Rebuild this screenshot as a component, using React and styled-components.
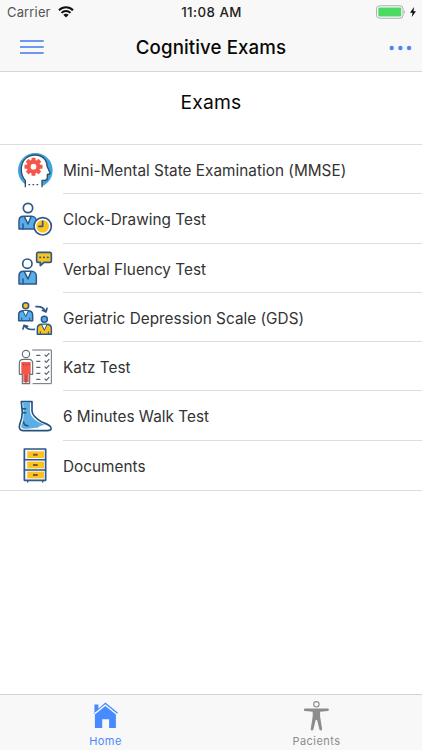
import React from 'react';
import styled, { createGlobalStyle } from 'styled-components';

const BLUE = '#4a87f0';
const NAVY = '#2d588a';
const SKY = '#5aaee8';
const YELLOW = '#fcc21f';
const RED = '#f2574a';

// Styles
const GlobalStyle = createGlobalStyle`
  body {
    margin: 0;
    background: #fff;
    font-family: Inter, 'Liberation Sans', sans-serif;
  }
`;

const Screen = styled.div`
  width: 422px;
  height: 750px;
  display: flex;
  flex-direction: column;
  overflow: hidden;
  background: #fff;
`;

const Header = styled.header`
  height: 71px;
  background: #f8f8f8;
  border-bottom: 1px solid #d6d6d6;
`;

const StatusBar = styled.div`
  height: 24px;
  display: grid;
  grid-template-columns: 1fr auto 1fr;
  align-items: center;
  padding: 0 6px 0 7px;
  box-sizing: border-box;
`;

const StatusGroup = styled.div`
  display: flex;
  align-items: center;
  justify-content: ${({ $end }) => ($end ? 'flex-end' : 'flex-start')};
  gap: ${({ $end }) => ($end ? '4px' : '7px')};
`;

const StatusText = styled.span`
  font-size: ${({ $strong }) => ($strong ? '13.3px' : '13px')};
  font-weight: ${({ $strong }) => ($strong ? 500 : 400)};
  letter-spacing: ${({ $strong }) => ($strong ? '0.45px' : '0.15px')};
  line-height: 24px;
  color: ${({ $strong }) => ($strong ? '#222' : '#555')};
`;

const NavBar = styled.div`
  height: 46px;
  display: grid;
  grid-template-columns: 60px 1fr 60px;
  align-items: center;
`;

const NavButton = styled.button`
  display: flex;
  justify-content: ${({ $end }) => ($end ? 'flex-end' : 'flex-start')};
  padding: 0 ${({ $end }) => ($end ? '10px 0 0' : '0 0 20px')};
  border: none;
  background: none;
`;

const NavTitle = styled.h1`
  margin: 0;
  font-size: 18.7px;
  font-weight: 500;
  letter-spacing: 0.1px;
  text-align: center;
  color: #080808;
`;

const Content = styled.main`
  flex: 1;
`;

const SectionTitle = styled.h2`
  height: 72px;
  box-sizing: border-box;
  margin: 0;
  padding-top: 18px;
  font-size: 19.3px;
  font-weight: 400;
  letter-spacing: 0.2px;
  line-height: 25px;
  text-align: center;
  color: #080808;
`;

const List = styled.ul`
  list-style: none;
  margin: 0;
  padding: 0;
  border-top: 1px solid #dedede;
  border-bottom: 1px solid #dedede;
`;

const Item = styled.li`
  height: 49.3px;
  display: flex;
  align-items: center;
  padding-left: 17px;
`;

const ItemLabel = styled.span`
  flex: 1;
  height: 100%;
  box-sizing: border-box;
  margin-left: 10px;
  font-size: 15.3px;
  letter-spacing: 0.03px;
  line-height: 51px;
  color: #333;
  border-bottom: 1px solid #dedede;

  ${Item}:last-child & {
    border-bottom: none;
  }
`;

const TabBar = styled.nav`
  height: 55px;
  display: flex;
  background: #f8f8f8;
  border-top: 1px solid #d3d3d3;
`;

const Tab = styled.a`
  flex: 1;
  display: flex;
  flex-direction: column;
  align-items: center;
  padding-top: 6px;
  color: ${({ $active }) => ($active ? '#488aff' : '#8c8c8c')};
`;

const TabLabel = styled.span`
  margin-top: 1px;
  font-size: 11px;
  font-weight: 400;
  letter-spacing: 0.45px;
  line-height: 14px;
`;

// Icons
const ItemIcon = ({ children }) => (
  <svg width="36" height="36" viewBox="21 19 108 108" fill="none" strokeLinecap="round" strokeLinejoin="round">
    {children}
  </svg>
);

const Gear = () => (
  <g>
    {[0, 45, 90, 135, 180, 225, 270, 315].map((angle) => (
      <rect key={angle} x="64.5" y="36" width="12" height="14" rx="1" fill={RED} transform={`rotate(${angle} 70.5 63)`} />
    ))}
    <circle cx="70.5" cy="63" r="14.5" stroke={RED} strokeWidth="12" />
  </g>
);

const headPath =
  'M46 123 V105 C37 95 33 84 34 67 C36 42 54 28 75 28 C97 28 111 43 111 62 L120 81 C121 84 118 86 112 86 V96 C112 102 109 104 103 104 H96 V123';

const MmseIcon = () => (
  <ItemIcon>
    <circle cx="76" cy="74" r="52" fill="#3aa5dc" />
    <path d={`${headPath} L96 130 H46 Z`} fill="#fff" />
    <path d={headPath} stroke="#344c63" strokeWidth="4" />
    <Gear />
    <path d="M57 117 h2 M69 117 h2 M81 117 h2" stroke="#344c63" strokeWidth="4" />
  </ItemIcon>
);

const Suit = () => (
  <g>
    <path d="M0 38 V14 C0 5 6 0 14 0 H38 C46 0 52 6 52 14 V38 Z" fill={SKY} stroke={NAVY} strokeWidth="4.5" />
    <path d="M17 2 L27 20 L36 2 Z" fill="#fff" />
    <path d="M16 1 L27 23 L36 1 M12 23 V38" stroke={NAVY} strokeWidth="4.5" />
  </g>
);

const ClockTestIcon = () => (
  <ItemIcon>
    <circle cx="54" cy="40" r="14" fill="#fff" stroke={NAVY} strokeWidth="5" />
    <g transform="translate(27 65)">
      <Suit />
    </g>
    <circle cx="98" cy="95" r="26" fill="#fff" stroke={NAVY} strokeWidth="5" />
    <circle cx="98" cy="95" r="19" fill={YELLOW} />
    <path d="M98 80 V95 H87" stroke={NAVY} strokeWidth="5" />
  </ItemIcon>
);

const VerbalIcon = () => (
  <ItemIcon>
    <circle cx="52" cy="60" r="14" fill="#fff" stroke={NAVY} strokeWidth="5" />
    <g transform="translate(27 83)">
      <Suit />
    </g>
    <path
      d="M84 26 H119 Q124 26 124 31 V51 Q124 56 119 56 H102 L91 66 V56 H84 Q80 56 80 51 V31 Q80 26 84 26 Z"
      fill={YELLOW}
      stroke={NAVY}
      strokeWidth="5"
    />
    <path d="M90 41 h1 M101.5 41 h1 M113 41 h1" stroke={NAVY} strokeWidth="5.5" />
  </ItemIcon>
);

const MiniPerson = ({ x, y, head, body }) => (
  <g transform={`translate(${x} ${y})`} stroke={NAVY} strokeWidth="4.5">
    <circle cx="21" cy="9" r="9" fill={head} />
    <path d="M0 54 V37 C0 29 6 24 14 24 H28 C36 24 42 29 42 37 V54 Z" fill={body} />
    <path d="M14 25 L21 39 L28 25 Z" fill="#fff" stroke="none" />
    <path d="M13 25 L21 42 L29 25 M9 46 V54 M33 46 V54" strokeWidth="3" />
  </g>
);

const GdsIcon = () => (
  <ItemIcon>
    <MiniPerson x={26} y={27} head={YELLOW} body={SKY} />
    <MiniPerson x={82} y={68} head={SKY} body={YELLOW} />
    <path d="M78 39 C92 38 102 43 106 53 M97 50 L108 55 L111 44" stroke={NAVY} strokeWidth="5" />
    <path d="M73 107 C58 109 48 104 43 96 M39 106 L42 95 L53 98" stroke={NAVY} strokeWidth="5" />
  </ItemIcon>
);

const KatzIcon = () => (
  <ItemIcon>
    <path d="M68 22 H124 V123 H69" stroke="#66717c" strokeWidth="3" />
    {[37, 55, 73, 91, 109].map((y) => (
      <path key={y} d={`M80 ${y + 1} H90 M105 ${y} l4 4 l8 -9`} stroke="#596675" strokeWidth="3.5" />
    ))}
    <circle cx="48" cy="34" r="11" fill="#fff" stroke="#66717c" strokeWidth="3.5" />
    <path
      d="M37 123 V95 H28 V62 Q28 50 40 50 H56 Q68 50 68 62 V95 H59 V123 Z"
      fill="#fff"
      stroke="#66717c"
      strokeWidth="3.5"
    />
    <path d="M34 58 H62 V94 H56 V119 H40 V94 H34 Z" fill={RED} />
    <path d="M48 98 V121" stroke="#873f44" strokeWidth="2.5" />
    <path d="M40 66 h1 M48 66 h1 M56 66 h1" stroke="#9d3d40" strokeWidth="3.5" />
  </ItemIcon>
);

const FootIcon = () => (
  <ItemIcon>
    <path
      d="M34 30 H66 V58 C67 70 77 80 94 90 C108 97 121 99 123 108 C125 115 119 117 112 117 H40 C29 117 26 109 29 99 C34 86 37 74 37 62 Z"
      fill="#fff"
      stroke="#25527e"
      strokeWidth="5"
    />
    <path
      d="M39 32 H60 V59 C62 74 72 84 87 92 C94 96 100 97 105 100 C94 101 88 104 82 109 C72 107 63 112 52 111 H42 C34 111 32 105 35 98 C42 84 42 64 39 32 Z"
      fill="#5daee5"
    />
    <path d="M37 51 H47 M38 63 H47 M41 91 C41 98 46 102 54 102" stroke="#25527e" strokeWidth="4.5" />
  </ItemIcon>
);

const CabinetIcon = () => (
  <ItemIcon>
    <rect x="43" y="25" width="64" height="94" fill="#f2f6f8" stroke={NAVY} strokeWidth="5" />
    <path d="M43 57 H107 M43 88 H107 M53 121 V124 M98 121 V124" stroke={NAVY} strokeWidth="4.5" />
    {[32, 63, 93].map((y) => (
      <g key={y}>
        <rect x="52" y={y} width="50" height="20" fill={YELLOW} />
        <rect x="69" y={y + 7} width="14" height="6" rx="1" fill="#765b36" />
      </g>
    ))}
  </ItemIcon>
);

const WifiIcon = () => (
  <svg width="16" height="12" viewBox="0 0 16 12" fill="none" stroke="#111" strokeWidth="2">
    <path d="M1 4.2 C5 .2 11 .2 15 4.2 M3.5 6.9 C6 4.4 10 4.4 12.5 6.9" />
    <path d="M8 11.4 L5.3 8.7 C6.8 7.3 9.2 7.3 10.7 8.7 Z" fill="#111" stroke="none" />
  </svg>
);

const BatteryIcon = () => (
  <svg width="30" height="14" viewBox="0 0 30 14">
    <rect x="0.6" y="0.8" width="26.4" height="12.4" rx="3" fill="#fff" stroke="#aaa" />
    <rect x="2.3" y="2.5" width="23" height="9" rx="1.2" fill="#4cd964" />
    <path d="M28.2 5 Q29.8 7 28.2 9 Z" fill="#999" />
  </svg>
);

const BoltIcon = () => (
  <svg width="6" height="10" viewBox="0 0 6 10">
    <path d="M4 0 L0 5.7 H2.5 L1.8 10 L6 4.2 H3.5 Z" fill="#111" />
  </svg>
);

const MenuIcon = () => (
  <svg width="24" height="16" viewBox="0 0 24 16">
    <path d="M0 2 H23.7 M0 8 H23.7 M0 14 H23.7" stroke="#6c99ef" strokeWidth="1.9" />
  </svg>
);

const MoreIcon = () => (
  <svg width="23" height="8" viewBox="0 -1 23 8" fill={BLUE}>
    <circle cx="2.7" cy="4" r="2.2" />
    <circle cx="11.4" cy="4" r="2.2" />
    <circle cx="20.1" cy="4" r="2.2" />
  </svg>
);

const HomeIcon = () => (
  <svg width="26" height="32" viewBox="0.6 0 26 32" fill="currentColor">
    <path d="M2 13 V3.5 H6 V7.8 L13 1.5 L25.6 11.7 L24.8 12.7 L13 3.2 L1.1 12.7 L.4 11.8 Z" />
    <path d="M13 5 L23.5 13.5 V27 H16.7 V18.3 H9.8 V27 H2.5 V13.5 Z" />
  </svg>
);

const BodyIcon = () => (
  <svg width="26" height="32" viewBox="0.6 0 26 32" fill="currentColor">
    <circle cx="13" cy="3.3" r="2.7" fill="none" stroke="currentColor" strokeWidth="1.1" />
    <path d="M1.8 7.5 H24.2 Q25.5 7.5 25.5 8.8 T24.2 10.1 L16.7 10.8 V15.5 L18.7 28 Q18.7 29.5 17.4 29.5 Q16.4 29.5 16 28.4 L13.7 19 H12.3 L10 28.4 Q9.6 29.5 8.6 29.5 Q7.3 29.5 7.3 28 L9.3 15.5 V10.8 L1.8 10.1 Q.5 10.1 .5 8.8 T1.8 7.5 Z" />
  </svg>
);

const exams = [
  { label: 'Mini-Mental State Examination (MMSE)', icon: MmseIcon },
  { label: 'Clock-Drawing Test', icon: ClockTestIcon },
  { label: 'Verbal Fluency Test', icon: VerbalIcon },
  { label: 'Geriatric Depression Scale (GDS)', icon: GdsIcon },
  { label: 'Katz Test', icon: KatzIcon },
  { label: '6 Minutes Walk Test', icon: FootIcon },
  { label: 'Documents', icon: CabinetIcon },
];

// Components
const ExamList = ({ items }) => (
  <List>
    {items.map(({ label, icon: Icon }) => (
      <Item key={label}>
        <Icon />
        <ItemLabel>{label}</ItemLabel>
      </Item>
    ))}
  </List>
);

const App = () => {
  return (
    <Screen>
      <GlobalStyle />
      <Header>
        <StatusBar>
          <StatusGroup>
            <StatusText>Carrier</StatusText>
            <WifiIcon />
          </StatusGroup>
          <StatusText $strong>11:08 AM</StatusText>
          <StatusGroup $end>
            <BatteryIcon />
            <BoltIcon />
          </StatusGroup>
        </StatusBar>
        <NavBar>
          <NavButton aria-label="Menu">
            <MenuIcon />
          </NavButton>
          <NavTitle>Cognitive Exams</NavTitle>
          <NavButton aria-label="More" $end>
            <MoreIcon />
          </NavButton>
        </NavBar>
      </Header>

      <Content>
        <SectionTitle>Exams</SectionTitle>
        <ExamList items={exams} />
      </Content>

      <TabBar>
        <Tab $active>
          <HomeIcon />
          <TabLabel>Home</TabLabel>
        </Tab>
        <Tab>
          <BodyIcon />
          <TabLabel>Pacients</TabLabel>
        </Tab>
      </TabBar>
    </Screen>
  );
};

export default App;
